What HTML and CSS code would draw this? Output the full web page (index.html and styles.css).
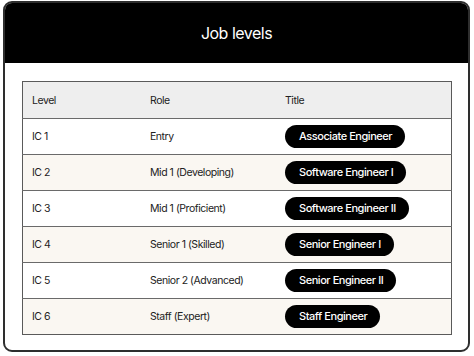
FILE: index.html
```html
<!DOCTYPE html>
<html>
<head>
<meta charset="utf-8">
<link rel="stylesheet" href="styles.css">
</head>
<body>
<div class="card">
  <div class="card-header">Job levels</div>
  <div class="card-body">
    <table class="levels">
      <thead>
        <tr><th class="c1">Level</th><th class="c2">Role</th><th>Title</th></tr>
      </thead>
      <tbody>
        <tr><td>IC 1</td><td>Entry</td><td><span class="pill">Associate Engineer</span></td></tr>
        <tr class="alt"><td>IC 2</td><td>Mid 1 (Developing)</td><td><span class="pill">Software Engineer I</span></td></tr>
        <tr><td>IC 3</td><td>Mid 1 (Proficient)</td><td><span class="pill">Software Engineer II</span></td></tr>
        <tr class="alt"><td>IC 4</td><td>Senior 1 (Skilled)</td><td><span class="pill">Senior Engineer I</span></td></tr>
        <tr><td>IC 5</td><td>Senior 2 (Advanced)</td><td><span class="pill">Senior Engineer II</span></td></tr>
        <tr class="alt"><td>IC 6</td><td>Staff (Expert)</td><td><span class="pill">Staff Engineer</span></td></tr>
      </tbody>
    </table>
  </div>
</div>
</body>
</html>
```

FILE: styles.css
```css
html, body {
  margin: 0;
  background: #ffffff;
}
body {
  padding: 1px 4px 4px 3px;
  font-family: Inter, "Noto Sans", sans-serif;
  color: #222;
}
.card {
  border: 2px solid #2e2e2e;
  border-radius: 9px;
  overflow: hidden;
  background: #fff;
  height: 351px;
  box-sizing: border-box;
}
.card-header {
  background: #000;
  color: #fff;
  height: 60px;
  display: flex;
  align-items: center;
  justify-content: center;
  font-size: 16px;
  letter-spacing: -0.5px;
}
.card-body {
  padding: 18px 16px 16px 17px;
}
.levels {
  width: 100%;
  border-collapse: collapse;
  border: 1.5px solid #5a5a5a;
  font-size: 10.5px;
  letter-spacing: -0.45px;
}
.levels th {
  background: #eeeeee;
  font-weight: 400;
  text-align: left;
  height: 36px;
  padding: 0 9px;
}
.levels td {
  height: 35px;
  padding: 0 9px;
  border-top: 1.5px solid #6a6a6a;
}
.levels .c1 { width: 99px; }
.levels .c2 { width: 117px; }
.levels td:nth-child(2), .levels th:nth-child(2) { padding-left: 10px; }
.levels tr.alt td { background: #faf7f2; }
.pill {
  display: inline-block;
  background: #000;
  color: #fff;
  border-radius: 12px;
  padding: 0 13px 0 14px;
  height: 23px;
  line-height: 23px;
  font-size: 11px;
  font-weight: 500;
  letter-spacing: -0.45px;
}
```
